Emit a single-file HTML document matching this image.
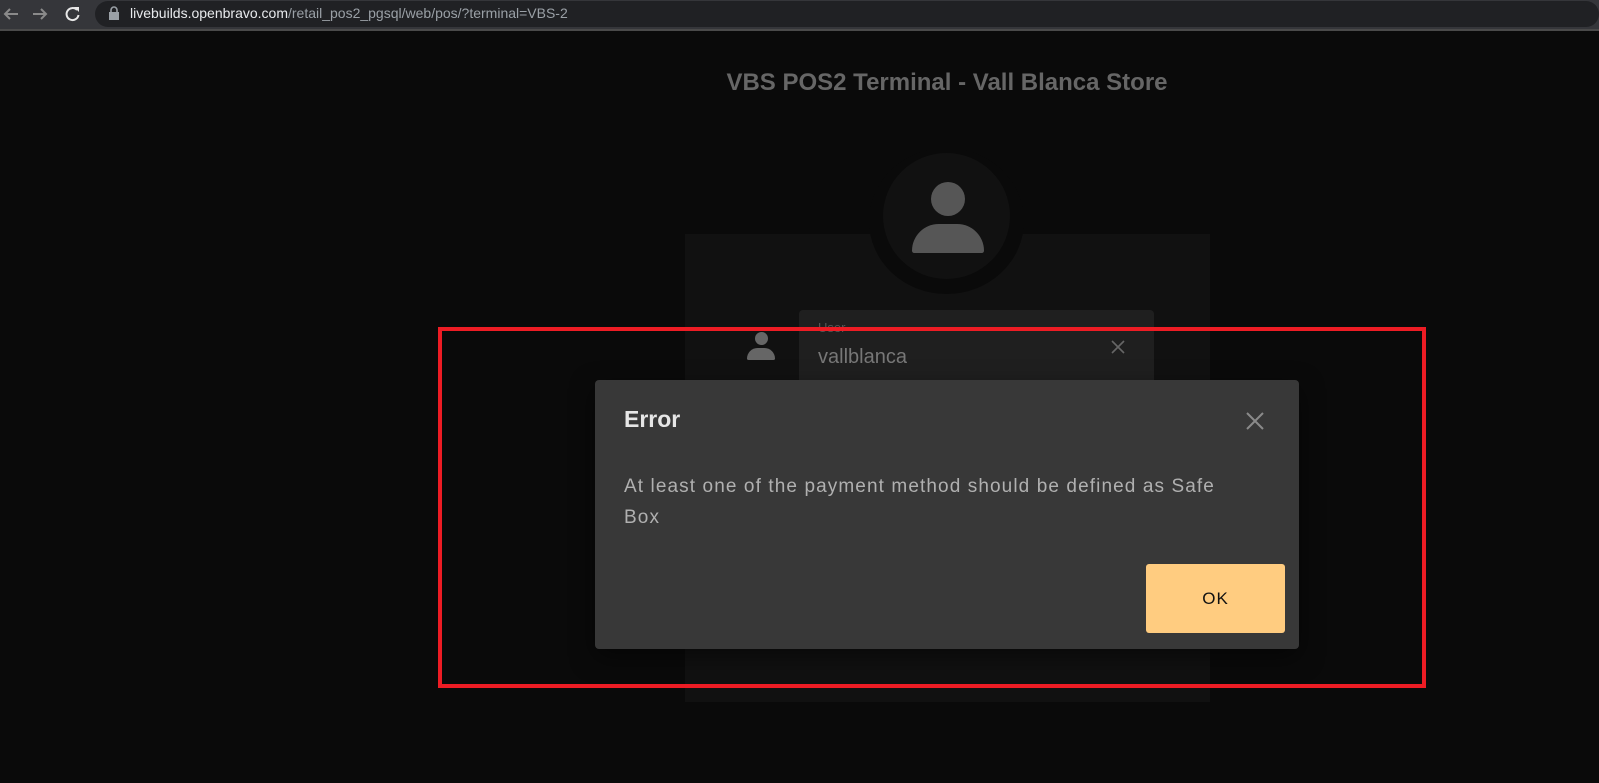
<!DOCTYPE html>
<html><head><meta charset="utf-8"><style>
*{margin:0;padding:0;box-sizing:border-box}
body{width:1599px;height:783px;background:#0a0a0a;font-family:"Liberation Sans",sans-serif;position:relative;overflow:hidden}
.abs{position:absolute}
</style></head><body>
<div class="abs" style="left:0;top:0;width:1599px;height:29px;background:#35363a"></div>
<div class="abs" style="left:0;top:29px;width:1599px;height:2px;background:#4a4a4a"></div>
<div class="abs" style="left:95px;top:1px;width:1504px;height:26px;border-radius:13px;background:#202124"></div>
<svg class="abs" style="left:0;top:0" width="95" height="29">
<path d="M18 14H5M10 9l-5 5 5 5" stroke="#8a8a8a" stroke-width="2" fill="none"/>
<path d="M33 14h13M41 9l5 5-5 5" stroke="#8a8a8a" stroke-width="2" fill="none"/>
<path d="M77 10a6 6 0 1 0 1.5 5" stroke="#e8e8e8" stroke-width="2" fill="none"/><path d="M74 7h5v5z" fill="#e8e8e8"/>
</svg>
<svg class="abs" style="left:108px;top:6px" width="12" height="16"><rect x="1" y="6" width="10" height="8" fill="#9aa0a6"/><path d="M3 6V4a3 3 0 0 1 6 0v2" stroke="#9aa0a6" stroke-width="1.6" fill="none"/></svg>
<div class="abs" style="left:130px;top:5px;font-size:14px;color:#9aa0a6;white-space:nowrap"><span style="color:#e8eaed">livebuilds.openbravo.com</span>/retail_pos2_pgsql/web/pos/?terminal=VBS-2</div>

<div class="abs" style="left:0;top:69px;width:1894px;text-align:center;font-size:24px;font-weight:bold;color:#666">VBS POS2 Terminal - Vall Blanca Store</div>

<div class="abs" style="left:685px;top:234px;width:525px;height:468px;background:#111"></div>
<div class="abs" style="left:869px;top:148px;width:155px;height:146px;border-radius:50%;background:#0a0a0a"></div>
<div class="abs" style="left:883px;top:153px;width:127px;height:126px;border-radius:50%;background:#111"></div>
<div class="abs" style="left:931px;top:182px;width:34px;height:34px;border-radius:50%;background:#565656"></div>
<div class="abs" style="left:912px;top:224px;width:72px;height:29px;border-radius:36px 36px 3px 3px;background:#565656"></div>

<div class="abs" style="left:799px;top:310px;width:355px;height:80px;border-radius:4px;background:#1f1f1f"></div>
<div class="abs" style="left:818px;top:320px;font-size:13px;color:#555">User</div>
<div class="abs" style="left:818px;top:346px;font-size:20px;color:#777">vallblanca</div>
<div class="abs" style="left:755px;top:332px;width:13px;height:13px;border-radius:50%;background:#666"></div>
<div class="abs" style="left:747px;top:348px;width:28px;height:12px;border-radius:14px 14px 2px 2px;background:#666"></div>
<svg class="abs" style="left:1110px;top:339px" width="16" height="16"><path d="M2 2l12 12M14 2L2 14" stroke="#666" stroke-width="1.6"/></svg>

<div class="abs" style="left:595px;top:380px;width:704px;height:269px;border-radius:4px;background:#383838;box-shadow:0 8px 24px rgba(0,0,0,.5)"></div>
<div class="abs" style="left:624px;top:406px;font-size:23px;font-weight:bold;color:#e6e6e6">Error</div>
<svg class="abs" style="left:1245px;top:411px" width="20" height="20"><path d="M2 2l16 16M18 2L2 18" stroke="#8a8a8a" stroke-width="2"/></svg>
<div class="abs" style="left:624px;top:471px;width:610px;font-size:19px;line-height:31px;color:#b0b0b0;letter-spacing:1.1px">At least one of the payment method should be defined as Safe Box</div>
<div class="abs" style="left:1146px;top:564px;width:139px;height:69px;border-radius:3px;background:#ffcc80;color:#111;font-size:17px;letter-spacing:1px;text-align:center;line-height:69px">OK</div>

<div class="abs" style="left:438px;top:327px;width:988px;height:361px;border:4px solid #ed1c24"></div>
</body></html>
